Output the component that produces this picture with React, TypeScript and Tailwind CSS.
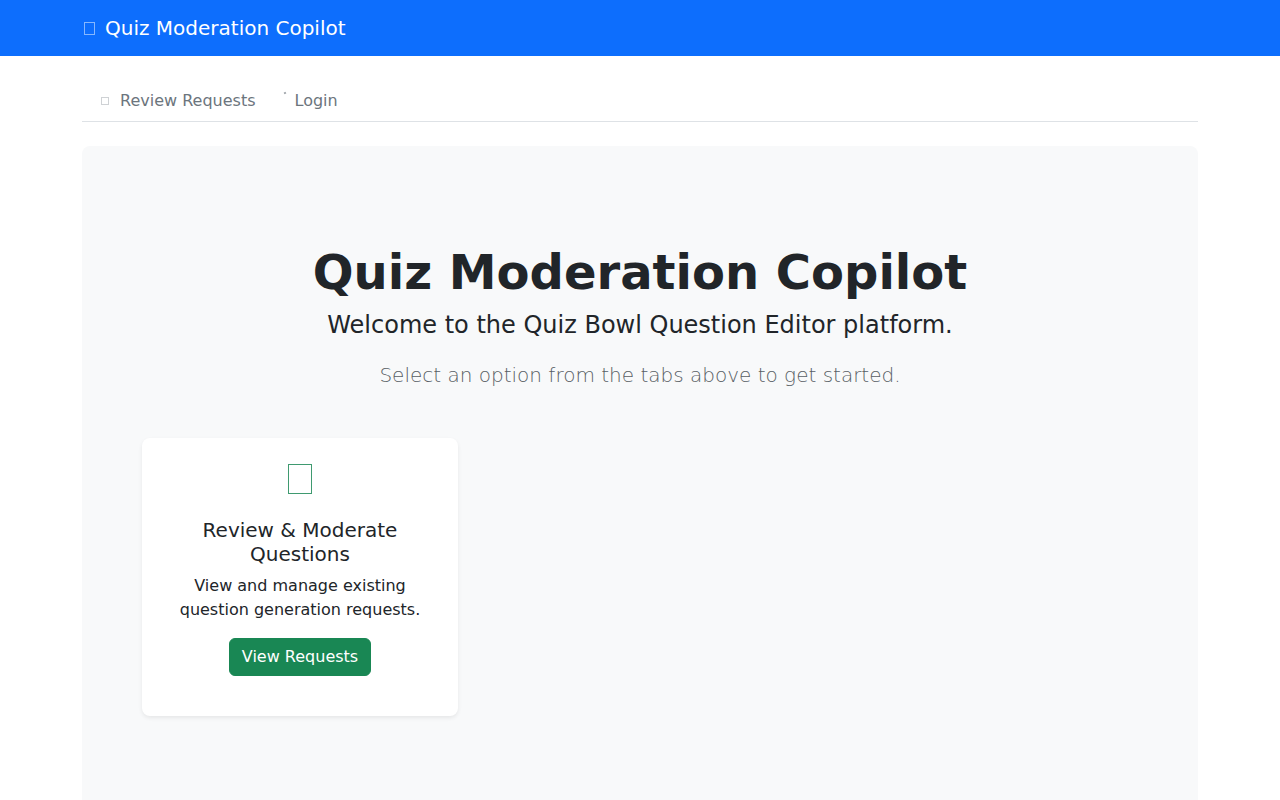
import React from "react";

export default function App() {
  const font = { fontFamily: '"DejaVu Sans", Verdana, sans-serif' };
  return (
    <div className="min-h-[800px] bg-white text-[#212529]" style={font}>
      <nav className="h-14 bg-[#0d6efd]">
        <div className="w-[1140px] mx-auto px-3 h-full flex items-center">
          <span className="inline-block w-[11px] h-[13px] border border-[#86b7fe] ml-[2px] mr-[10px]" />
          <span className="text-[20px] leading-[30px] text-white">Quiz Moderation Copilot</span>
        </div>
      </nav>

      <div className="w-[1140px] mx-auto px-3">
        <div className="mt-6 flex border-b border-[#dee2e6]">
          <div className="-mb-px border-y border-transparent px-4 py-2 flex items-center text-[16px] leading-6 text-[#6c757d]">
            <span className="inline-block w-[8px] h-[8px] border border-[#cfd2d5] ml-[3px] mr-[11px]" />
            <span>Review Requests</span>
          </div>
          <div className="-mb-px border-y border-transparent px-4 py-2 flex items-start text-[16px] leading-6 text-[#6c757d]">
            <span className="inline-block w-[2px] h-[2px] mt-[3px] bg-[#9aa0a6] -ml-[4px] mr-[9px] rotate-[-30deg]" />
            <span>Login</span>
          </div>
        </div>

        <div className="mt-6 bg-[#f8f9fa] rounded-lg pt-[98px] pb-[120px]">
          <div className="text-center">
            <h1 className="text-[48px] leading-[1.2] font-bold mb-[9px] text-[#212529]">Quiz Moderation Copilot</h1>
            <h2 className="text-[24px] leading-[1.2] font-normal text-[#212529] mb-[21px]">
              Welcome to the Quiz Bowl Question Editor platform.
            </h2>
            <p className="text-[20px] leading-[1.5] font-light text-[#595f65] mb-12">
              Select an option from the tabs above to get started.
            </p>
          </div>

          <div className="ml-[60px] w-[316px] bg-white rounded-lg shadow-[0_2px_4px_rgba(0,0,0,0.075)] pt-[26px] pb-10 px-6 text-center">
            <div className="mx-auto w-[24px] h-[30px] border border-[#3f9a70] mb-6" />
            <h5 className="text-[20px] leading-6 font-normal mb-2 text-[#212529]">Review &amp; Moderate Questions</h5>
            <p className="text-[16px] leading-6 mb-4 text-[#212529]">
              View and manage existing question generation requests.
            </p>
            <button className="inline-block bg-[#198754] border border-[#198754] text-white text-[16px] leading-6 px-3 py-[6px] rounded-md">
              View Requests
            </button>
          </div>
        </div>
      </div>
    </div>
  );
}
